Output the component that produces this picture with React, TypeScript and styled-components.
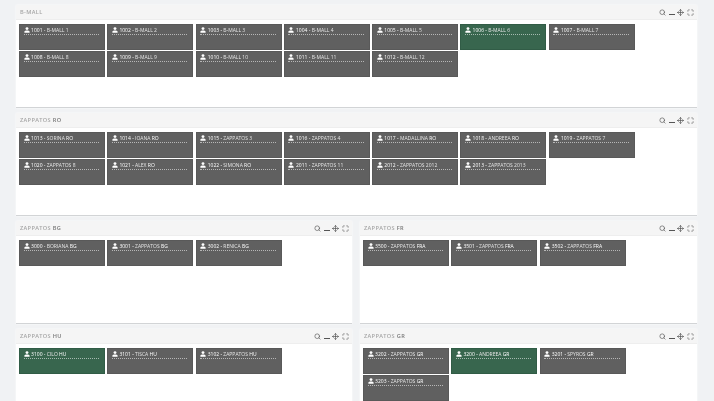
import React from "react";
import styled, { createGlobalStyle } from "styled-components";
import { Search, Move, Maximize } from "lucide-react";

const GlobalStyle = createGlobalStyle`
  html, body {
    margin: 0;
    padding: 0;
    height: 401px;
    overflow: hidden;
    background: #f0f2f4;
    font-family: "Open Sans", "Liberation Sans", sans-serif;
  }
`;

type Agent = { id: string; name: string; region?: string; active?: boolean };

const num = (from: number, names: string[]): Agent[] =>
  names.map((name, i) => ({ id: String(from + i), name }));

const bmall: Agent[] = [
  ...num(1001, ["B-MALL 1", "B-MALL 2", "B-MALL 3", "B-MALL 4", "B-MALL 5"]),
  { id: "1006", name: "B-MALL 6", active: true },
  { id: "1007", name: "B-MALL 7" },
  ...num(1008, ["B-MALL 8", "B-MALL 9", "B-MALL 10", "B-MALL 11", "B-MALL 12"]),
];

const ro: Agent[] = [
  { id: "1013", name: "SORINA", region: "RO" },
  { id: "1014", name: "IOANA", region: "RO" },
  { id: "1015", name: "ZAPPATOS 3" },
  { id: "1016", name: "ZAPPATOS 4" },
  { id: "1017", name: "MADALLINA", region: "RO" },
  { id: "1018", name: "ANDREEA", region: "RO" },
  { id: "1019", name: "ZAPPATOS 7" },
  { id: "1020", name: "ZAPPATOS 8" },
  { id: "1021", name: "ALEX", region: "RO" },
  { id: "1022", name: "SIMONA", region: "RO" },
  { id: "2011", name: "ZAPPATOS 11" },
  { id: "2012", name: "ZAPPATOS 2012" },
  { id: "2013", name: "ZAPPATOS 2013" },
];

const bg: Agent[] = [
  { id: "3000", name: "BORIANA", region: "BG" },
  { id: "3001", name: "ZAPPATOS", region: "BG" },
  { id: "3002", name: "RENICA", region: "BG" },
];

const fr: Agent[] = [
  { id: "3500", name: "ZAPPATOS", region: "FRA" },
  { id: "3501", name: "ZAPPATOS", region: "FRA" },
  { id: "3502", name: "ZAPPATOS", region: "FRA" },
];

const hu: Agent[] = [
  { id: "3100", name: "CILO", region: "HU", active: true },
  { id: "3101", name: "TISCA", region: "HU" },
  { id: "3102", name: "ZAPPATOS", region: "HU" },
];

const gr: Agent[] = [
  { id: "3202", name: "ZAPPATOS", region: "GR" },
  { id: "3200", name: "ANDREEA", region: "GR", active: true },
  { id: "3201", name: "SPYROS", region: "GR" },
  { id: "3203", name: "ZAPPATOS", region: "GR" },
];

const Page = styled.div`
  width: 681px;
  margin-left: 16px;
  padding-top: 4.5px;
  display: flex;
  flex-direction: column;
  gap: 5px;
`;

const Halves = styled.div`
  display: grid;
  grid-template-columns: 336px 337px;
  column-gap: 8px;
  row-gap: 5px;
`;

const PanelBox = styled.section`
  height: 103px;
  box-sizing: border-box;
  background: #fff;
  border-bottom: 1px solid #d2d4d6;
  box-shadow: 0 0 2px rgba(255, 255, 255, 0.9);
  display: flex;
  flex-direction: column;
`;

const PanelHead = styled.header`
  height: 15px;
  flex: none;
  background: #f5f5f5;
  border-bottom: 1px solid #eeeeee;
  box-sizing: border-box;
  padding: 1px 3.5px 0 4px;
  display: flex;
  align-items: center;
  justify-content: space-between;
`;

const Title = styled.h3`
  margin: 0;
  font-size: 5.6px;
  font-weight: 600;
  letter-spacing: 0.35px;
  color: #777;
  filter: blur(0.2px);
`;

const Tools = styled.div`
  display: flex;
  align-items: center;
  gap: 2.5px;
  color: #555;
`;

const MinusBar = styled.span`
  width: 6px;
  height: 1.4px;
  margin-top: 5px;
  background: #555;
`;

const Cards = styled.div`
  display: flex;
  flex-wrap: wrap;
  align-content: flex-start;
  gap: 1.4px 2.3px;
  padding: 4px 3px 0;
`;

const Card = styled.div<{ $active?: boolean }>`
  width: 86px;
  height: 26px;
  box-sizing: border-box;
  padding: 1.5px 5px 0 3.5px;
  background: ${(p) => (p.$active ? "#38664e" : "#606060")};
  border: 0.5px solid ${(p) => (p.$active ? "#315c46" : "#595959")};
  color: #fff;
`;

const CardHead = styled.div`
  height: 8px;
  display: flex;
  align-items: center;
  gap: 1.6px;
  font-size: 5px;
  font-weight: 500;
  white-space: nowrap;
  border-bottom: 0.6px dotted rgba(255, 255, 255, 0.55);
`;

const CardLabel = styled.span`
  filter: blur(0.12px);
`;

const Blurred = styled.span<{ $tone: string }>`
  filter: blur(0.5px);
  color: ${(p) => p.$tone};
`;

const UserIcon = () => (
  <svg width="6" height="6" viewBox="0 0 12 12" fill="#fff">
    <circle cx="6" cy="3.2" r="2.9" />
    <path d="M0.8 11.5V9.4c0-1.3 1.5-2 3.2-2.4h4c1.7.4 3.2 1.1 3.2 2.4v2.1z" />
  </svg>
);

const AgentCard = ({ agent }: { agent: Agent }) => (
  <Card $active={agent.active}>
    <CardHead>
      <UserIcon />
      <CardLabel>
        {agent.id} - <Blurred $tone="#e4e4e4">{agent.name}</Blurred>
        {agent.region ? ` ${agent.region}` : ""}
      </CardLabel>
    </CardHead>
  </Card>
);

const Panel = ({ title, suffix, agents }: { title: string; suffix?: string; agents: Agent[] }) => (
  <PanelBox>
    <PanelHead>
      <Title>
        <Blurred $tone="#a6a6a6">{title}</Blurred>
        {suffix ? ` ${suffix}` : ""}
      </Title>
      <Tools>
        <Search size={7} strokeWidth={2.2} />
        <MinusBar />
        <Move size={7} strokeWidth={2.4} />
        <Maximize size={7} strokeWidth={2} />
      </Tools>
    </PanelHead>
    <Cards>
      {agents.map((a) => (
        <AgentCard key={a.id} agent={a} />
      ))}
    </Cards>
  </PanelBox>
);

export default function App() {
  return (
    <>
      <GlobalStyle />
      <Page>
        <Panel title="B-MALL" agents={bmall} />
        <Panel title="ZAPPATOS" suffix="RO" agents={ro} />
        <Halves>
          <Panel title="ZAPPATOS" suffix="BG" agents={bg} />
          <Panel title="ZAPPATOS" suffix="FR" agents={fr} />
          <Panel title="ZAPPATOS" suffix="HU" agents={hu} />
          <Panel title="ZAPPATOS" suffix="GR" agents={gr} />
        </Halves>
      </Page>
    </>
  );
}
